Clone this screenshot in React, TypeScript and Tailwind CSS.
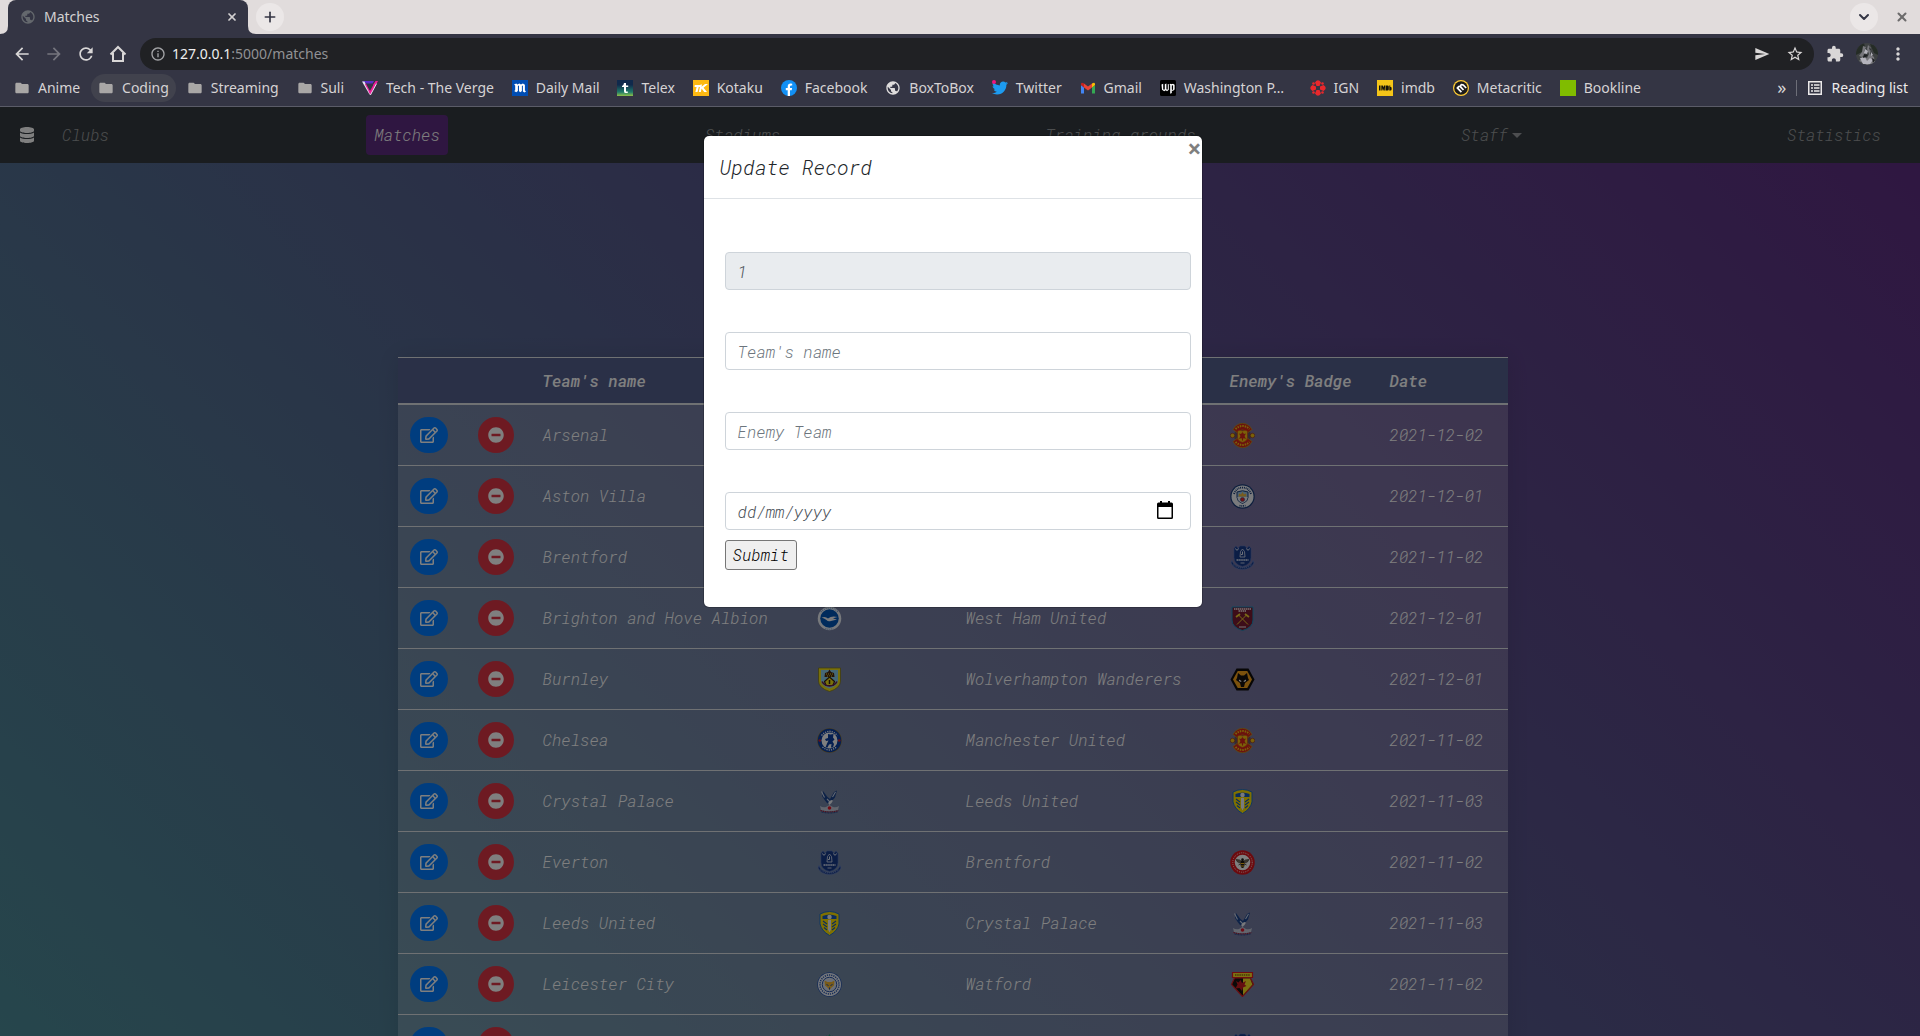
import type { ReactNode } from "react";
import {
  MdArrowBack,
  MdArrowForward,
  MdExtension,
  MdFolder,
  MdInfoOutline,
  MdMoreVert,
  MdPublic,
  MdRefresh,
  MdSend,
  MdStarBorder,
} from "react-icons/md";
import { FaDatabase, FaMinusCircle, FaRegEdit, FaTwitter } from "react-icons/fa";
import { ChevronDown, Plus, X } from "lucide-react";

/* ---------- club badges ---------- */

function Badge({ name, children }: { name: string; children: ReactNode }) {
  return (
    <svg viewBox="0 0 50 50" className="block size-[25px]" role="img" aria-label={name}>
      {children}
    </svg>
  );
}

const united = (
  <Badge name="Manchester United">
    <circle cx="25" cy="25" r="17" fill="#6b5560" />
    <path d="M11 6Q25-5 39 6l5 7-8 6Q25 9 14 19l-8-6z" fill="#d6241a" stroke="#c79a10" strokeWidth="1.5" />
    <path d="M11 44q14 11 28 0l5-7-8-6q-11 10-22 0l-8 6z" fill="#d6241a" stroke="#c79a10" strokeWidth="1.5" />
    <path d="M11 12q14-12 28 0M11 38q14 12 28 0" fill="none" stroke="#f5c211" strokeWidth="4" strokeDasharray="3 2" />
    <circle cx="5" cy="25" r="4.500" fill="#f5c211" stroke="#8a1510" />
    <circle cx="45" cy="25" r="4.500" fill="#f5c211" stroke="#8a1510" />
    <path d="M15 16q5-3 10 0 5-3 10 0v13q0 7-10 10-10-3-10-10z" fill="#f5c211" stroke="#d6241a" />
    <path d="M25 18l3 4 4-1-3 5 3 6-5-2-2 7-2-7-5 2 3-6-3-5 4 1z" fill="#d6241a" />
  </Badge>
);

const city = (
  <Badge name="Manchester City">
    <circle cx="25" cy="25" r="24.500" fill="#1c3f7c" />
    <circle cx="25" cy="25" r="22" fill="#f4f6fa" />
    <path d="M8 20Q13 7 25 7t17 13M19 43q6 2 12 0" fill="none" stroke="#1c3f7c" strokeWidth="3.500" strokeDasharray="2 1.600" />
    <path d="M14 16q11-5 22 0v11q0 8-11 12-11-4-11-12z" fill="#98c5e9" stroke="#1c3f7c" strokeWidth="2" />
    <path d="M15 26h20q0 9-10 12-10-3-10-12z" fill="#eef3f9" />
    <path d="M17 25l1-6 4 2 3-5 3 5 4-2 1 6z" fill="#f0b93a" />
    <circle cx="25" cy="31" r="4.200" fill="#e0282e" stroke="#1c3f7c" />
  </Badge>
);

const everton = (
  <Badge name="Everton">
    <path d="M8 7l4-5 4 5 4-5h10l4 5 4-5 4 5v18q0 14-17 18Q8 39 8 25z" fill="#173a8a" stroke="#4f70bd" strokeWidth="1.200" />
    <path d="M4 31q3 12 21 14 18-2 21-14l2 5Q42 48 25 49 8 48 2 36z" fill="#173a8a" stroke="#6583cb" strokeWidth="1.200" />
    <path d="M20 24l1-11 4-5 4 5 1 11z" fill="#173a8a" stroke="#dfe6f5" strokeWidth="1.600" />
    <path d="M11 7q3 7 6 0M33 7q3 7 6 0M25 13v6h-3" fill="none" stroke="#dfe6f5" strokeWidth="2" />
    <path d="M13 30h24" stroke="#dfe6f5" strokeWidth="3" strokeDasharray="3 .8" />
    <path d="M21 36h8" stroke="#dfe6f5" strokeWidth="1.600" />
    <path d="M6 39q8 7 19 7t19-7" fill="none" stroke="#9fb4e0" strokeWidth="1.500" strokeDasharray="2 2" />
  </Badge>
);

const westHam = (
  <Badge name="West Ham United">
    <path d="M4 2h42v26q0 15-21 21Q4 43 4 28z" fill="#7a1a33" stroke="#1f8fbd" strokeWidth="2" />
    <path d="M8 6h34M17 10h16" stroke="#f2eaea" strokeWidth="2.600" strokeDasharray="3 1" />
    <path d="M14 37l19-19M36 37L17 18" stroke="#f2d22e" strokeWidth="2" />
    <path d="M12 22l8-6M30 16l8 6" stroke="#f2d22e" strokeWidth="3.600" />
    <path d="M18 42h14" stroke="#f2eaea" strokeWidth="2" />
  </Badge>
);

const wolves = (
  <Badge name="Wolverhampton Wanderers">
    <path d="M13 3h24l12 22-12 22H13L1 25z" fill="#0e0d0c" />
    <path d="M15.500 8h19L44 25l-9.500 17h-19L6 25z" fill="#f9a51a" />
    <path d="M16 12l6 5h6l6-5 2 10 2 4-8 6-2 8h-6l-2-8-8-6 2-4z" fill="#14110f" />
    <path d="M18 25l5 3-1 2-4-2zM32 25l-5 3 1 2 4-2z" fill="#fff" />
  </Badge>
);

const leeds = (
  <Badge name="Leeds United">
    <path d="M6 6q19-10 38 0v20q-3 14-19 23Q9 40 6 26z" fill="#ffe100" stroke="#1d6fc4" strokeWidth="2" />
    <path d="M11 10q14-6 28 0v6H11z" fill="#1558b8" />
    <circle cx="25" cy="12" r="4.500" fill="#f4f6fa" />
    <path d="M22 18h6v19l-3 6-3-6z" fill="#f4f6fa" />
    <path d="M12 20l8 6M12 26l8 6M14 33l6 5M38 20l-8 6M38 26l-8 6M36 33l-6 5" stroke="#1558b8" strokeWidth="2.200" />
  </Badge>
);

const brentford = (
  <Badge name="Brentford">
    <circle cx="25" cy="25" r="24.500" fill="#d9151c" />
    <circle cx="25" cy="25" r="19.500" fill="none" stroke="#fff" strokeWidth="2" strokeDasharray="1.600 2.400" />
    <circle cx="25" cy="25" r="15.500" fill="#fff" />
    <path d="M12 19q9-1 12 5-8 5-12-5zM38 19q-9-1-12 5 8 5 12-5z" fill="#77705f" stroke="#2a251c" />
    <path d="M17 30l5-3M33 30l-5-3" stroke="#2a251c" strokeWidth="1.600" />
    <ellipse cx="25" cy="28" rx="4" ry="8" fill="#1c1812" />
    <path d="M21 27h8M22 32h6" stroke="#f3b81c" strokeWidth="2.200" />
    <circle cx="25" cy="19" r="2.500" fill="#1c1812" />
  </Badge>
);

const palace = (
  <Badge name="Crystal Palace">
    <path d="M12 4l9 12 5 4 8-14 6-3-4 14-7 8-3 6-6-3-4-5-6-9z" fill="#1b458f" />
    <path d="M9 5l6 12M37 6l-6 10M20 20l6 6" stroke="#c9d3e6" strokeWidth="2.200" />
    <path d="M28 22l4 1-3 5-4 4-3-4z" fill="#f1f3f8" />
    <path d="M6 34q6 4 12 2l7-4 7 4q6 2 12-2l-2 8q-17 5-34 0z" fill="#c4cbda" />
    <circle cx="25" cy="38" r="3.600" fill="#e0182d" />
    <path d="M7 43q18 6 36 0" fill="none" stroke="#a7213a" strokeWidth="2.400" strokeDasharray="3 1.500" />
    <path d="M9 46q16 4 32 0" fill="none" stroke="#1b458f" strokeWidth="2" strokeDasharray="4 2" />
  </Badge>
);

const brighton = (
  <Badge name="Brighton and Hove Albion">
    <circle cx="25" cy="25" r="23.500" fill="#eef2f8" />
    <path d="M8 12Q14 4 25 4t17 8M17 45q8 3 16 0" fill="none" stroke="#5c8fce" strokeWidth="2.400" strokeDasharray="1.600 2.400" />
    <circle cx="25" cy="25" r="18.500" fill="#0057b8" />
    <path d="M9 23q8-3 13 2 7-6 19-3-6 1-9 3l8 2-12 3q-6 2-9-2-5-4-10-5z" fill="#f4f7fb" />
  </Badge>
);

const burnley = (
  <Badge name="Burnley">
    <path d="M3 2h44v26q0 14-22 21Q3 42 3 28z" fill="#f1e019" stroke="#7d7216" strokeWidth="1.400" />
    <path d="M8 6h34v21q0 11-17 16Q8 38 8 27z" fill="#8dd1ec" />
    <path d="M25 5l3 5 6 2 1 8H15l1-8 6-2z" fill="#4a2410" />
    <path d="M18 14h14M20 18h10" stroke="#f1e019" strokeWidth="2" strokeDasharray="2 2" />
    <path d="M15 29l10-9 10 9-3 8H18z" fill="#f1e019" stroke="#35210f" strokeWidth="2.400" />
    <path d="M10 29q4 8 15 9 11-1 15-9" fill="none" stroke="#6c1d45" strokeWidth="3" />
    <path d="M25 26v8" stroke="#35210f" strokeWidth="3" />
  </Badge>
);

const chelsea = (
  <Badge name="Chelsea">
    <circle cx="25" cy="25" r="24.500" fill="#8f7433" />
    <circle cx="25" cy="25" r="23.500" fill="#0a3ea2" />
    <path d="M9 15q16-17 32 0M11 38q14 12 28 0" fill="none" stroke="#fff" strokeWidth="2.600" strokeDasharray="2.400 2.200" />
    <circle cx="5.500" cy="25" r="2.600" fill="#d3202f" />
    <circle cx="44.500" cy="25" r="2.600" fill="#d3202f" />
    <circle cx="25" cy="25" r="16" fill="#fff" />
    <path d="M22 12l5 1 6-1-1 7 3 4-4 4 3 5-2 7h-4l1-7-5 1-3 6h-4l3-8 3-6-5 1-2-4 6-2z" fill="#0a3ea2" />
  </Badge>
);

const leicester = (
  <Badge name="Leicester City">
    <circle cx="25" cy="25" r="24.500" fill="#2a57b0" />
    <circle cx="25" cy="25" r="23" fill="#eef1f7" />
    <circle cx="25" cy="25" r="19" fill="none" stroke="#2352ac" strokeWidth="3" strokeDasharray="2.400 2" />
    <circle cx="25" cy="25" r="14.500" fill="#d7dfee" stroke="#2352ac" strokeWidth="2" />
    <path d="M15 17l6 3h8l6-3-1 10-5 4-4 5-4-5-5-4z" fill="#f2b632" />
    <path d="M19 25l4 2M31 25l-4 2M25 31v4" stroke="#2352ac" strokeWidth="2" />
  </Badge>
);

const watford = (
  <Badge name="Watford">
    <path d="M5 1h40v10H5z" fill="#fbe122" stroke="#dc1d23" strokeWidth="2.400" />
    <path d="M10 6h30" stroke="#a68b14" strokeWidth="4" strokeDasharray="3 1.400" />
    <path d="M9 12h32l6 13-22 24L3 25z" fill="#171412" stroke="#dc1d23" strokeWidth="2.400" />
    <path d="M26 13h14l5 12-19 21z" fill="#fbe122" />
    <path d="M12 18l5 3 4-5 3 6 8-4-3 7 4 3-7 3-2 7-5-6-8 1 4-8z" fill="#c81a20" />
  </Badge>
);

const arsenal = (
  <Badge name="Arsenal">
    <path d="M4 4q21-6 42 0v20q0 16-21 25Q4 40 4 24z" fill="#db0007" stroke="#023474" strokeWidth="2" />
    <path d="M9 26h30v5H9z" fill="#d9b95b" />
  </Badge>
);

const villa = (
  <Badge name="Aston Villa">
    <path d="M4 4h42v20q0 16-21 25Q4 40 4 24z" fill="#95bfe5" stroke="#670e36" strokeWidth="2" />
    <path d="M18 14l14 4-4 18h-8z" fill="#fee505" />
  </Badge>
);

const liverpool = (
  <Badge name="Liverpool">
    <path d="M19 5l3 2 3-5 3 5 3-2 2 5H17z" fill="#1c9c6a" />
    <path d="M9 12h32v20q0 10-16 16Q9 42 9 32z" fill="#f3eee6" stroke="#1c9c6a" strokeWidth="2" />
    <path d="M25 16l7 8-5 6 1 10h-6l1-10-5-6z" fill="#c8102e" />
  </Badge>
);

const matches = [
  { team: "Arsenal", badge: arsenal, enemy: "Manchester United", enemyBadge: united, date: "2021-12-02" },
  { team: "Aston Villa", badge: villa, enemy: "Manchester City", enemyBadge: city, date: "2021-12-01" },
  { team: "Brentford", badge: brentford, enemy: "Everton", enemyBadge: everton, date: "2021-11-02" },
  { team: "Brighton and Hove Albion", badge: brighton, enemy: "West Ham United", enemyBadge: westHam, date: "2021-12-01" },
  { team: "Burnley", badge: burnley, enemy: "Wolverhampton Wanderers", enemyBadge: wolves, date: "2021-12-01" },
  { team: "Chelsea", badge: chelsea, enemy: "Manchester United", enemyBadge: united, date: "2021-11-02" },
  { team: "Crystal Palace", badge: palace, enemy: "Leeds United", enemyBadge: leeds, date: "2021-11-03" },
  { team: "Everton", badge: everton, enemy: "Brentford", enemyBadge: brentford, date: "2021-11-02" },
  { team: "Leeds United", badge: leeds, enemy: "Crystal Palace", enemyBadge: palace, date: "2021-11-03" },
  { team: "Leicester City", badge: leicester, enemy: "Watford", enemyBadge: watford, date: "2021-11-02" },
  { team: "Liverpool", badge: liverpool, enemy: "Everton", enemyBadge: everton, date: "2021-12-01" },
];

/* ---------- browser window ---------- */

function Site({ children }: { children: ReactNode }) {
  return (
    <svg viewBox="0 0 16 16" className="size-4 shrink-0" aria-hidden="true">
      {children}
    </svg>
  );
}

const folder = <MdFolder className="size-4 shrink-0 text-[#a9a7a6]" />;

const bookmarks: { label: string; icon: ReactNode }[] = [
  { label: "Anime", icon: folder },
  { label: "Coding", icon: folder },
  { label: "Streaming", icon: folder },
  { label: "Suli", icon: folder },
  {
    label: "Tech - The Verge",
    icon: (
      <Site>
        <path d="M0 1h12l-1.500 2.600H4.600z" fill="#5b2fc9" />
        <path d="M0 1.400h2.400L8 12l-.2 3z" fill="#e8e4f4" />
        <path d="M13.600 1H16L8.400 15 6.600 11.600z" fill="#ee1c9a" />
        <path d="M4.400 5h6.800L8 11z" fill="#343544" />
        <path d="M3.400 4l4.400 8" stroke="#ee1c9a" strokeWidth="1.200" />
        <path d="M14.500 3.600L8.400 15" stroke="#e8e4f4" strokeWidth="1" />
      </Site>
    ),
  },
  {
    label: "Daily Mail",
    icon: (
      <Site>
        <rect width="16" height="16" fill="#004db3" />
        <path
          d="M2 4.400l2.300-1 1.100 1 2-1 1.500 1 2-1 2 1.300v5.800l1.200.7-1.600 1.200-1.600-1V5.600l-1 .3v5.200l-1.500 1.200-1.400-1V5.600l-1.100.3v5.200l-1.700 1.200-2-1.300 1-.7V5.400z"
          fill="#fff"
        />
      </Site>
    ),
  },
  {
    label: "Telex",
    icon: (
      <Site>
        <defs>
          <linearGradient id="telex" x2="0" y2="1">
            <stop offset=".3" stopColor="#10294c" />
            <stop offset=".75" stopColor="#1f7a6a" />
            <stop offset="1" stopColor="#8fc14a" />
          </linearGradient>
        </defs>
        <rect width="16" height="16" fill="url(#telex)" />
        <path d="M7 3h2v2.600h2.200V7H9v3.800q0 1 1 1l1-.2v1q-1 .6-2.300.5Q7 13 7 11.200V7H5V6q1.800-.6 2-3z" fill="#fff" />
      </Site>
    ),
  },
  {
    label: "Kotaku",
    icon: (
      <Site>
        <rect width="16" height="16" fill="#fdb913" />
        <path
          d="M1.800 5h6L7.300 7H5.800l-1.300 5H2.400l1.200-5H1.500zM9 4.500l-.5 2.300L12 4h3l-4.500 3.700L14 12h-2.800L8.600 8.600 7.800 12H5.800l1.700-7.500z"
          fill="#fff"
        />
      </Site>
    ),
  },
  {
    label: "Facebook",
    icon: (
      <Site>
        <circle cx="8" cy="8" r="8" fill="#1290f5" />
        <path d="M6.700 16v-5.700H4.800V8h1.900V6.800q0-3.200 3-3.200l1.500.1v1.900h-1q-1.200 0-1.200 1.200V8h2.100l-.4 2.300H9V16z" fill="#fff" />
      </Site>
    ),
  },
  { label: "BoxToBox", icon: <MdPublic className="size-4 shrink-0 text-[#dedcdc]" /> },
  {
    label: "Twitter",
    icon: (
      <span className="relative size-4 shrink-0">
        <FaTwitter className="size-4 text-[#1d9bf0]" />
        <span className="absolute top-0 left-0 size-1 rounded-full bg-[#f0147e]" />
      </span>
    ),
  },
  {
    label: "Gmail",
    icon: (
      <Site>
        <path d="M1 5v8.500h3V7.500z" fill="#4285f4" />
        <path d="M15 5v8.500h-3V7.500z" fill="#34a853" />
        <path d="M4 7.500v-4l4 3 4-3v4l-4 3z" fill="#ea4335" />
        <path d="M1 5V4q.3-2 2-1l1 .6v4z" fill="#c5221f" />
        <path d="M15 5V4q-.3-2-2-1l-1 .6v4z" fill="#fbbc04" />
      </Site>
    ),
  },
  {
    label: "Washington P…",
    icon: (
      <Site>
        <rect width="16" height="16" rx="1.500" fill="#000" />
        <path
          d="M1.500 4.500l1.700-.8v5.500l.8.600.8-.6V4.200l1.600-.6v5.600l.8.500.6-.5V4l1 .3v5.500L7 11.300l-1.200-1-1.600 1L2 9.800z"
          fill="#fff"
        />
        <path
          d="M9.500 4.600l1.300-.9.900.6 1.300-.6 1.600 1v4.900L12.800 11l-1-.7V13l-1.600.8V5.200zM11.800 5.400v4l.8.500.5-.4V5.600l-.6-.4z"
          fill="#fff"
        />
      </Site>
    ),
  },
  {
    label: "IGN",
    icon: (
      <Site>
        <g fill="#e8282c">
          <path d="M5 2.500Q8-2 11 2.500L9.500 6h-3zM5 13.500Q8 18 11 13.500L9.500 10h-3zM2.500 5Q-2 8 2.500 11L6 9.500v-3zM13.500 5Q18 8 13.500 11L10 9.500v-3z" />
          <circle cx="3.500" cy="3.500" r="1.300" />
          <circle cx="12.500" cy="3.500" r="1.300" />
          <circle cx="3.500" cy="12.500" r="1.300" />
          <circle cx="12.500" cy="12.500" r="1.300" />
        </g>
      </Site>
    ),
  },
  {
    label: "imdb",
    icon: (
      <Site>
        <rect width="16" height="16" fill="#f5c518" />
        <path
          d="M2 5.500h1.500v5H2zM4.300 5.500h1.500l.6 2 .6-2h1.500v5H7.200V8l-.7 2.500h-.6L5.200 8v2.500h-.9zM9 5.500h1.500q1.300 0 1.300 1.300v2.400q0 1.300-1.300 1.300H9zM12.300 5.500h1V7q1.300-.3 1.300 1v1.500q-.2 1.200-1.300 1h-1z"
          fill="#14120a"
        />
      </Site>
    ),
  },
  {
    label: "Metacritic",
    icon: (
      <Site>
        <circle cx="8" cy="8" r="8" fill="#ffcc34" />
        <circle cx="8" cy="8" r="6.800" fill="#1b1b1b" />
        <path
          d="M3.800 7.400l4.600 4.800M5 8.600q-.2-3 2.500-1.800l3 3.200M7.600 6.600q0-3 2.600-1.600l3 3"
          fill="none"
          stroke="#fff"
          strokeWidth="1.700"
        />
      </Site>
    ),
  },
  { label: "Bookline", icon: <span className="size-4 shrink-0 bg-[#80bc00]" /> },
];

function TabStrip() {
  return (
    <header className="flex h-[34px] shrink-0 items-center bg-[#e1dcdc] pl-2 text-sm">
      <div className="relative flex h-full w-60 items-center rounded-t-lg bg-[#343544] pr-2.5 pl-3 text-[#d3d1d2]">
        <svg viewBox="0 0 8 8" className="absolute bottom-0 -left-2 size-2 text-[#343544]" aria-hidden="true">
          <path d="M8 0v8H0q8 0 8-8z" fill="currentColor" />
        </svg>
        <svg viewBox="0 0 8 8" className="absolute -right-2 bottom-0 size-2 text-[#343544]" aria-hidden="true">
          <path d="M0 0v8h8Q0 8 0 0z" fill="currentColor" />
        </svg>
        <MdPublic className="size-4 text-[#64686d]" />
        <span className="ml-2 flex-1">Matches</span>
        <button type="button" aria-label="Close tab">
          <X className="size-3" strokeWidth={3.5} />
        </button>
      </div>
      <button
        type="button"
        aria-label="New tab"
        className="ml-2 flex size-7 items-center justify-center rounded-full bg-[#ebe7e7] text-[#343544]"
      >
        <Plus className="size-4" strokeWidth={2.5} />
      </button>
      <button
        type="button"
        aria-label="Search tabs"
        className="ml-auto flex size-7 items-center justify-center rounded-full bg-[#ebe7e7] text-[#343544]"
      >
        <ChevronDown className="size-4" strokeWidth={3} />
      </button>
      <button
        type="button"
        aria-label="Close window"
        className="mr-2.5 ml-4 flex size-4 items-center justify-center text-[#6c6b6c]"
      >
        <X className="size-3.5" strokeWidth={3.5} />
      </button>
    </header>
  );
}

function Toolbar() {
  return (
    <div className="flex h-10 shrink-0 items-center px-3 text-[#d9d7d7]">
      <div className="mr-3 flex gap-3">
        <button type="button" aria-label="Back">
          <MdArrowBack className="size-5" />
        </button>
        <button type="button" aria-label="Forward" className="text-[#75757e]">
          <MdArrowForward className="size-5" />
        </button>
        <button type="button" aria-label="Reload">
          <MdRefresh className="size-5" />
        </button>
        <button type="button" aria-label="Home">
          <svg viewBox="0 0 20 20" className="size-5" fill="none" stroke="currentColor" strokeWidth="2" aria-hidden="true">
            <path d="M2.500 10.500L10 3l7.500 7.500M5 9v8h10V9" />
          </svg>
        </button>
      </div>
      <div className="flex h-8 flex-1 items-center rounded-full bg-[#202124] px-2.5">
        <MdInfoOutline className="size-4 text-[#a3a4a7]" />
        <div className="ml-1.5 flex-1 text-sm text-[#909194]">
          <span className="text-[#eeeeef]">127.0.0.1</span>:5000/matches
        </div>
        <button type="button" aria-label="Send this page" className="mr-4">
          <MdSend className="size-4" />
        </button>
        <button type="button" aria-label="Bookmark this page">
          <MdStarBorder className="size-[18px]" />
        </button>
      </div>
      <button type="button" aria-label="Extensions" className="ml-3">
        <MdExtension className="size-[18px]" />
      </button>
      <button type="button" aria-label="Profile" className="ml-3">
        <svg viewBox="0 0 22 22" className="size-[22px] rounded-full" aria-hidden="true">
          <rect width="22" height="22" fill="#3f4243" />
          <path d="M0 3l8-3 1 4-3 5-6 3zM14 1l8 2v9l-4-2z" fill="#252c26" />
          <path d="M7 3l3 1-2 4 2 3-4 3-3-1 3-4zM12 2l3 3-1 6 4 3 1 6-8 2-8-4 4-4 4 1 2-4-2-5z" fill="#77777c" />
          <path d="M4 15l5-1 2 4 3-3 3 2-3 4H7zM9 6l3 2-1 3-3-1zM15 9l2 3-2 1z" fill="#b4b3bc" />
          <path d="M8 11l4 1-2 2-3 1zM13 4l2 2-1 2zM16 15l3 2-2 3z" fill="#1d1f22" />
        </svg>
      </button>
      <button type="button" aria-label="Menu" className="ml-2.5">
        <MdMoreVert className="size-5" />
      </button>
    </div>
  );
}

function BookmarksBar() {
  return (
    <div className="flex h-[33px] shrink-0 border-b border-[#5b5c68] px-3 pl-[7px] text-sm text-[#d6d3d4]">
      <ul className="flex max-w-[1641px] flex-1 justify-between">
        {bookmarks.map(({ label, icon }) => (
          <li key={label} className={label.startsWith("Washington") ? "w-[146px]" : undefined}>
            <a
              href="#bookmark"
              className={
                label === "Coding"
                  ? "flex h-7 items-center gap-2 rounded-full bg-[#41424d] px-[7px]"
                  : "flex h-7 items-center gap-2 rounded-full px-[7px]"
              }
            >
              {icon}
              {label}
            </a>
          </li>
        ))}
      </ul>
      <div className="ml-auto flex h-7 items-center">
        <button type="button" aria-label="More bookmarks" className="pb-0.5 text-lg">
          »
        </button>
        <span className="mx-2.5 h-4 w-px bg-[#6d6e78]" />
        <button type="button" className="flex items-center gap-2 text-[#eceaea]">
          <svg viewBox="0 0 16 16" className="size-4" fill="none" stroke="currentColor" aria-hidden="true">
            <rect x="1.750" y="1.750" width="12.500" height="12.500" strokeWidth="1.500" />
            <path d="M4 5h2M4 8h2M4 11h2M7 5h5.500M7 8h5.500M7 11h5.500" strokeWidth="1.400" />
          </svg>
          Reading list
        </button>
      </div>
    </div>
  );
}

/* ---------- page ---------- */

const navItems = ["Clubs", "Matches", "Stadiums", "Training grounds", "Staff", "Statistics"];

function NavBar() {
  return (
    <nav className="flex items-center bg-[#343a40] py-2 pr-[31px] pl-5">
      <FaDatabase className="mr-5 h-4 w-3.5 text-white" />
      <ul className="flex flex-1 justify-between">
        {navItems.map((item) => (
          <li key={item}>
            <a
              href={`#${item.toLowerCase().replace(" ", "-")}`}
              className={
                item === "Matches"
                  ? "flex items-center rounded bg-[#5f2c82] p-2 text-white"
                  : "flex items-center rounded p-2 text-white/50"
              }
            >
              {item}
              {item === "Staff" && (
                <span className="ml-1 border-x-[5px] border-t-[5px] border-x-transparent border-t-current" />
              )}
            </a>
          </li>
        ))}
      </ul>
    </nav>
  );
}

function MatchTable() {
  return (
    <table className="w-[1110px] table-fixed border-separate border-spacing-0 text-white shadow-[0_0_20px_rgba(0,0,0,0.1)]">
      <colgroup>
        <col className="w-[68px]" />
        <col className="w-[65px]" />
        <col className="w-[274px]" />
        <col className="w-[149px]" />
        <col className="w-[264px]" />
        <col className="w-[160px]" />
        <col />
      </colgroup>
      <thead className="text-left">
        <tr className="bg-[#55608f] *:h-12 *:border-t *:border-b-2 *:border-[#dee2e6] *:px-3 *:font-medium">
          <th aria-label="Edit" />
          <th aria-label="Delete" />
          <th>Team's name</th>
          <th>Team's Badge</th>
          <th>Enemy Team</th>
          <th>Enemy's Badge</th>
          <th>Date</th>
        </tr>
      </thead>
      <tbody>
        {matches.map((match) => (
          <tr
            key={match.team}
            className="*:border-t *:border-[#dee2e6] *:bg-white/20 *:bg-clip-padding *:p-3 *:align-middle first:*:border-t-0"
          >
            <td>
              <button
                type="button"
                aria-label={`Edit ${match.team}`}
                className="flex h-9 w-[38px] items-center justify-center rounded-full bg-[#007bff]"
              >
                <FaRegEdit className="h-4 w-[18px]" />
              </button>
            </td>
            <td>
              <button
                type="button"
                aria-label={`Delete ${match.team}`}
                className="flex size-9 items-center justify-center rounded-full bg-[#dc3545]"
              >
                <FaMinusCircle className="size-4" />
              </button>
            </td>
            <td>{match.team}</td>
            <td>{match.badge}</td>
            <td>{match.enemy}</td>
            <td>{match.enemyBadge}</td>
            <td>{match.date}</td>
          </tr>
        ))}
      </tbody>
    </table>
  );
}

function UpdateDialog() {
  const field = "block h-[38px] w-full rounded border border-[#ced4da] px-3 font-light text-[#495057] italic";
  return (
    <div
      role="dialog"
      aria-labelledby="dialog-title"
      className="w-[500px] rounded-md border border-black/20 bg-white bg-clip-padding text-[#212529]"
    >
      <div className="relative border-b border-[#dee2e6] p-4">
        <h5 id="dialog-title" className="text-xl leading-[30px]">
          Update Record
        </h5>
        <button
          type="button"
          aria-label="Close"
          className="absolute top-0 right-0 text-2xl leading-6 font-bold text-black/50 not-italic"
        >
          ×
        </button>
      </div>
      <form className="pt-[53px] pr-[11px] pb-[37px] pl-[21px]">
        <div className="flex flex-col gap-[42px]">
          <div>
            <label htmlFor="match-id" className="sr-only">
              ID
            </label>
            <input id="match-id" readOnly value="1" className={`${field} bg-[#e9ecef]`} />
          </div>
          <div>
            <label htmlFor="team" className="sr-only">
              Team's name
            </label>
            <input id="team" placeholder="Team's name" className={`${field} placeholder:text-[#6c757d]`} />
          </div>
          <div>
            <label htmlFor="enemy" className="sr-only">
              Enemy Team
            </label>
            <input id="enemy" placeholder="Enemy Team" className={`${field} placeholder:text-[#6c757d]`} />
          </div>
          <div className="relative">
            <label htmlFor="date" className="sr-only">
              Date
            </label>
            <input id="date" placeholder="dd/mm/yyyy" className={`${field} placeholder:text-[#495057]`} />
            <button type="button" aria-label="Pick a date" className="absolute top-2 right-4">
              <svg viewBox="0 0 20 20" className="size-5" aria-hidden="true">
                <path
                  d="M16.500 2.500H15V1h-2v1.500H7V1H5v1.500H3.500A1.500 1.500 0 0 0 2 4v13.500A1.500 1.500 0 0 0 3.500 19h13a1.500 1.500 0 0 0 1.500-1.500V4a1.500 1.500 0 0 0-1.500-1.500zm0 15h-13V7h13z"
                  fill="#000"
                />
              </svg>
            </button>
          </div>
        </div>
        <button
          type="submit"
          className="mt-2.5 block h-[30px] rounded-[3px] border border-[#767676] bg-[#efefef] px-[7px] text-black"
        >
          Submit
        </button>
      </form>
    </div>
  );
}

export default function App() {
  return (
    <div className="flex h-screen flex-col overflow-hidden bg-[#343544] font-['Noto_Sans',sans-serif]">
      <TabStrip />
      <Toolbar />
      <BookmarksBar />
      <div className="relative flex-1 overflow-hidden font-['Roboto_Mono',monospace] text-base font-light italic">
        <div className="min-h-[1520px] bg-[linear-gradient(45deg,#49a09d,#5f2c82)]">
          <NavBar />
          <main className="flex justify-center pt-[194px] pr-[15px]">
            <MatchTable />
          </main>
        </div>
        <div className="absolute inset-0 flex items-start justify-center bg-black/50 pt-7 pr-[15px]">
          <UpdateDialog />
        </div>
      </div>
    </div>
  );
}
